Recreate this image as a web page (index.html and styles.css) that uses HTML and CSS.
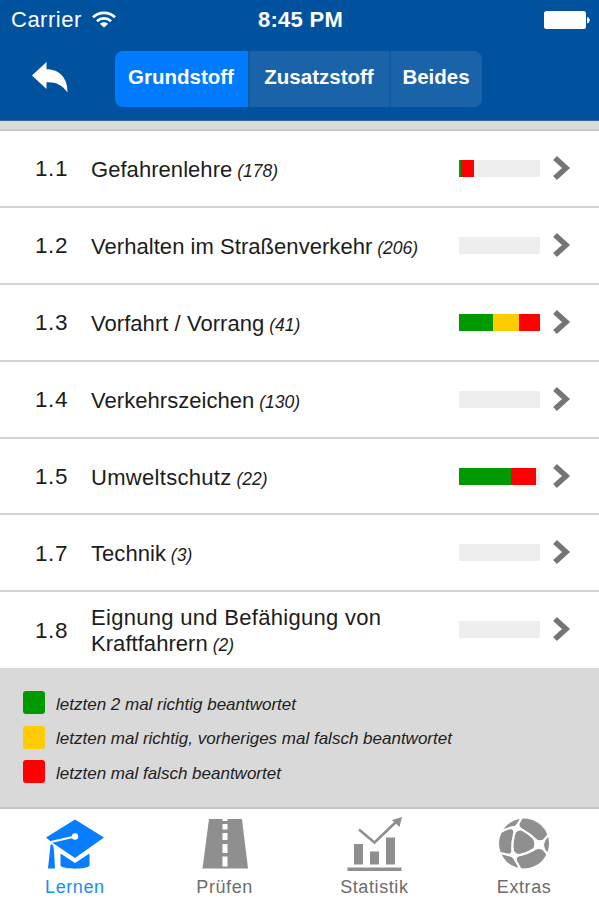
FILE: index.html
```html
<!DOCTYPE html>
<html lang="de">
<head>
    <meta charset="UTF-8">
    <meta name="viewport" content="width=device-width, initial-scale=1.0">
    <title>Lernen - Grundstoff</title>
    <link rel="stylesheet" href="styles.css">
</head>
<body>
    <header class="header">
        <div class="status-bar">
            <div class="carrier">
                <span>Carrier</span>
                <svg class="wifi" width="24" height="17" viewBox="0 0 24 17" fill="none" stroke="#fff" stroke-width="2.7">
                    <path d="M1 6.2C7 .4 17 .4 23 6.2"/>
                    <path d="M5 10.2C9 6.5 15 6.5 19 10.2"/>
                    <path d="M12 16.6L7.8 12.7C10.2 10.6 13.8 10.6 16.2 12.7Z" fill="#fff" stroke="none"/>
                </svg>
            </div>
            <div class="time">8:45 PM</div>
            <div class="battery">
                <svg width="46" height="18" viewBox="0 0 46 18" fill="#fff">
                    <rect x="0" y="0" width="42" height="18" rx="2.5"/>
                    <path d="M43 6C46.6 6.5 46.6 11.8 43 12.5Z"/>
                </svg>
            </div>
        </div>
        <nav class="nav-bar">
            <a href="#" class="back">
                <svg width="37" height="32" viewBox="0 0 37 32" fill="#fff">
                    <path d="M0 13.5L14.5 0V7.2C27 7 36 16 35.5 30.5C30 22.5 23 19.7 14.5 20.3V27Z"/>
                </svg>
            </a>
            <div class="segments">
                <button class="segment active">Grundstoff</button>
                <button class="segment">Zusatzstoff</button>
                <button class="segment">Beides</button>
            </div>
        </nav>
    </header>
    <div class="strip"></div>

    <main class="topics">
        <a href="#" class="topic">
            <span class="number">1.1</span>
            <span class="title">Gefahrenlehre<em> (178)</em></span>
            <span class="bar"><i class="right" style="width: 2%"></i><i class="wrong" style="width: 17%"></i></span>
            <svg class="chevron" viewBox="0 0 17 24"><path d="M2 2L13 12L2 22"/></svg>
        </a>
        <a href="#" class="topic">
            <span class="number">1.2</span>
            <span class="title">Verhalten im Straßenverkehr<em> (206)</em></span>
            <span class="bar"></span>
            <svg class="chevron" viewBox="0 0 17 24"><path d="M2 2L13 12L2 22"/></svg>
        </a>
        <a href="#" class="topic">
            <span class="number">1.3</span>
            <span class="title">Vorfahrt / Vorrang<em> (41)</em></span>
            <span class="bar"><i class="right" style="width: 42%"></i><i class="partly" style="width: 32%"></i><i class="wrong" style="width: 26%"></i></span>
            <svg class="chevron" viewBox="0 0 17 24"><path d="M2 2L13 12L2 22"/></svg>
        </a>
        <a href="#" class="topic">
            <span class="number">1.4</span>
            <span class="title">Verkehrszeichen<em> (130)</em></span>
            <span class="bar"></span>
            <svg class="chevron" viewBox="0 0 17 24"><path d="M2 2L13 12L2 22"/></svg>
        </a>
        <a href="#" class="topic">
            <span class="number">1.5</span>
            <span class="title wide">Umweltschutz<em> (22)</em></span>
            <span class="bar"><i class="right" style="width: 64%"></i><i class="wrong" style="width: 31%"></i></span>
            <svg class="chevron" viewBox="0 0 17 24"><path d="M2 2L13 12L2 22"/></svg>
        </a>
        <a href="#" class="topic">
            <span class="number">1.7</span>
            <span class="title">Technik<em> (3)</em></span>
            <span class="bar"></span>
            <svg class="chevron" viewBox="0 0 17 24"><path d="M2 2L13 12L2 22"/></svg>
        </a>
        <a href="#" class="topic">
            <span class="number">1.8</span>
            <span class="title"><span class="wide">Eignung und Befähigung von</span><br>Kraftfahrern<em> (2)</em></span>
            <span class="bar"></span>
            <svg class="chevron" viewBox="0 0 17 24"><path d="M2 2L13 12L2 22"/></svg>
        </a>
    </main>

    <section class="legend">
        <div class="legend-item"><i class="right"></i><span>letzten 2 mal richtig beantwortet</span></div>
        <div class="legend-item"><i class="partly"></i><span>letzten mal richtig, vorheriges mal falsch beantwortet</span></div>
        <div class="legend-item"><i class="wrong"></i><span>letzten mal falsch beantwortet</span></div>
    </section>

    <footer class="tab-bar">
        <a href="#" class="tab active">
            <svg width="60" height="56" viewBox="0 0 60 56" fill="#087dff">
                <path d="M30 10.5L59 28.5L30 49L8.5 34.5L7 33.5L1 28.5Z"/>
                <path d="M15.5 44.5L30 54L44.5 44.5V57C40 60.5 20 60.5 15.5 57Z"/>
                <path d="M5.5 36C7.5 33.5 8.8 37 9 42L10 59.5H3Z"/>
                <path d="M6 33L30 27.5" stroke="#fff" stroke-width="2.2" fill="none"/>
                <circle cx="30" cy="27.5" r="3.2" fill="#fff"/>
            </svg>
            <span>Lernen</span>
        </a>
        <a href="#" class="tab">
            <svg width="60" height="56" viewBox="0 0 60 56" fill="#8f8f8f">
                <path d="M14 10H47L53 59.5H7.5Z"/>
                <path d="M30 9.5V59" stroke="#fff" stroke-width="5" stroke-dasharray="2.5 3 5.5 3.5 7 4 9 3.5 10 12" fill="none"/>
            </svg>
            <span>Prüfen</span>
        </a>
        <a href="#" class="tab">
            <svg width="60" height="56" viewBox="0 0 60 56" fill="#8f8f8f">
                <path d="M10 35H19V55.5H10ZM26 42.5H35V55.5H26ZM42 28.5H51V55.5H42ZM3.5 58.5H57.5V62H3.5Z"/>
                <path d="M15 20.5L30.5 33.5L53 12" fill="none" stroke="#8f8f8f" stroke-width="2.5"/>
                <path d="M58 8L55.5 18L48 11Z"/>
            </svg>
            <span>Statistik</span>
        </a>
        <a href="#" class="tab">
            <svg width="60" height="56" viewBox="0 0 60 56">
                <circle cx="30" cy="34.5" r="25" fill="#8f8f8f"/>
                <g fill="none" stroke="#fff" stroke-width="2.3">
                    <path d="M28 8L22.5 18Q16.5 33 19 47L27 61"/>
                    <path d="M5 24Q14 18 22.5 18Q37 24 46 36L56 24"/>
                    <path d="M4 43.5L19 47Q34 46 46 36L55 47"/>
                </g>
                <path d="M17 19.5Q22 18 24.5 13Q24 18 29 21Q23 20 19.5 26Q21 21 17 19.5ZM13 45.5Q18 46 19 39Q19 45 27 46Q21 47 22.5 53Q19 47 13 45.5ZM39 29Q46 34 51 30Q48 36 51 42Q45 37 38 42Q43 36 39 29Z" fill="#fff" stroke="#fff"/>
            </svg>
            <span>Extras</span>
        </a>
    </footer>
</body>
</html>
```

FILE: styles.css
```css
* {
    box-sizing: border-box;
}
body {
    font-family: "Liberation Sans", Arial, sans-serif;
    margin: 0;
    background-color: #fff;
    width: 599px;
    height: 900px;
    display: flex;
    flex-direction: column;
    overflow: hidden;
}
a {
    color: inherit;
    text-decoration: none;
}
svg {
    display: block;
    overflow: visible;
}
.header {
    height: 121px;
    flex-shrink: 0;
    background-color: #00529f;
    border-bottom: 1px solid #33699f;
    color: #fff;
}
.status-bar {
    display: grid;
    grid-template-columns: 1fr auto 1fr;
    align-items: center;
    height: 40px;
    padding: 0 9px 0 11px;
}
.carrier {
    display: flex;
    align-items: center;
    gap: 10px;
    font-size: 22px;
    letter-spacing: 0.5px;
}
.wifi {
    margin-top: -2px;
}
.time {
    font-size: 22px;
    font-weight: bold;
    letter-spacing: 0.3px;
}
.battery {
    justify-self: end;
}
.nav-bar {
    display: flex;
    padding: 11px 0 0 32px;
}
.back {
    width: 83px;
    padding-top: 11px;
}
.segments {
    display: flex;
    height: 56px;
    border-radius: 8px;
    overflow: hidden;
}
.segment {
    background-color: #1b63a8;
    border: none;
    border-left: 2px solid #0e5aa3;
    color: #fff;
    font-family: inherit;
    font-size: 20.5px;
    font-weight: bold;
    padding: 0 1px 4px 0;
    width: 93px;
}
.segment:nth-child(1) {
    width: 133px;
    border-left: none;
}
.segment:nth-child(2) {
    width: 141px;
}
.segment.active {
    background-color: #007aff;
}
.strip {
    height: 10px;
    flex-shrink: 0;
    background-color: #d9dada;
    border-bottom: 2px solid #c6c7c7;
}
.topics {
    height: 537px;
    flex-shrink: 0;
    display: grid;
    grid-template-rows: repeat(6, 76.9px) 1fr;
}
.topic {
    display: flex;
    align-items: center;
    padding: 4px 29px 0 35px;
    border-bottom: 2px solid #d3d4d4;
    color: #1c1c1c;
}
.topic:last-child {
    border-bottom: none;
    padding-top: 3px;
}
.number {
    width: 56px;
    margin-top: -2px;
    font-size: 22.5px;
    letter-spacing: 0.6px;
}
.title {
    width: 368px;
    font-size: 22px;
    line-height: 26px;
    letter-spacing: 0.05px;
}
.wide {
    letter-spacing: 0.3px;
}
.title em {
    font-size: 17.5px;
    letter-spacing: 0;
}
.bar {
    display: flex;
    width: 81px;
    height: 17px;
    margin-top: -4px;
    background-color: #eee;
}
.right {
    background-color: #009900;
}
.partly {
    background-color: #ffcc00;
}
.wrong {
    background-color: #ff0000;
}
.chevron {
    width: 17px;
    height: 24px;
    margin: -5px 0 0 13px;
    fill: none;
    stroke: #757575;
    stroke-width: 5.5;
}
.legend {
    height: 141px;
    flex-shrink: 0;
    display: flex;
    flex-direction: column;
    gap: 11px;
    padding: 23px 0 0 23px;
    background-color: #d9d9d9;
    border-bottom: 2px solid #c3c3c3;
}
.legend-item {
    display: flex;
    align-items: center;
    gap: 11px;
    height: 23.5px;
    font-size: 17px;
    font-style: italic;
    color: #222;
}
.legend-item i {
    width: 22px;
    height: 23px;
    border-radius: 3px;
}
.legend-item span {
    padding-top: 4px;
}
.tab-bar {
    flex-grow: 1;
    display: grid;
    grid-template-columns: repeat(4, 1fr);
}
.tab {
    display: flex;
    flex-direction: column;
    align-items: center;
    gap: 12px;
    font-size: 18px;
    letter-spacing: 0.6px;
    color: #6c6c6c;
}
.tab.active {
    color: #1a8cff;
}
```
